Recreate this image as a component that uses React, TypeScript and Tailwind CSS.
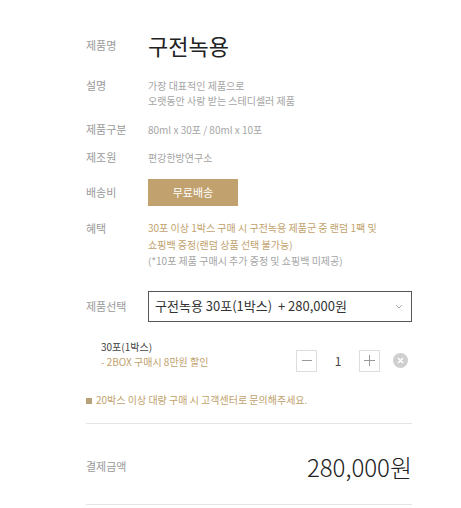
export default function App() {
  return (
    <div
      className="w-[461px] h-[508px] bg-white overflow-hidden"
      style={{ fontFamily: '"Noto Sans CJK KR", "Noto Sans", sans-serif' }}
    >
      <div className="ml-[86px] w-[326px] pt-[30px]">
        {/* 제품명 */}
        <div className="flex items-center h-[30px]">
          <div className="w-[62px] text-[11px] text-[#9a9a9a]">제품명</div>
          <h1 className="text-[22px] leading-[30px] text-[#222]">구전녹용</h1>
        </div>

        {/* 설명 */}
        <div className="flex mt-[18px] text-[10px] leading-[15px]">
          <div className="w-[62px] text-[11px] text-[#9a9a9a]">설명</div>
          <p className="text-[#a5a5a5]">
            가장 대표적인 제품으로
            <br />
            오랫동안 사랑 받는 스테디셀러 제품
          </p>
        </div>

        <div className="flex mt-[14px] text-[10px] leading-[15px]">
          <div className="w-[62px] text-[11px] text-[#9a9a9a]">제품구분</div>
          <p className="text-[#a5a5a5]">80ml x 30포 / 80ml x 10포</p>
        </div>

        <div className="flex mt-[13px] text-[10px] leading-[15px]">
          <div className="w-[62px] text-[11px] text-[#9a9a9a]">제조원</div>
          <p className="text-[#a5a5a5]">편강한방연구소</p>
        </div>

        <div className="flex items-center mt-[14px]">
          <div className="w-[62px] text-[11px] text-[#9a9a9a]">배송비</div>
          <span className="w-[90px] h-[27px] flex items-center justify-center bg-[#c1a26e] text-white text-[11px]">
            무료배송
          </span>
        </div>

        {/* 혜택 */}
        <div className="flex mt-[14px] text-[10px] leading-[16.5px]">
          <div className="w-[62px] text-[11px] text-[#9a9a9a]">혜택</div>
          <p>
            <span className="text-[#c1a26e]">
              30포 이상 1박스 구매 시 구전녹용 제품군 중 랜덤 1팩 및
              <br />
              쇼핑백 증정(랜덤 상품 선택 불가능)
            </span>
            <br />
            <span className="text-[#a5a5a5]">(*10포 제품 구매시 추가 증정 및 쇼핑백 미제공)</span>
          </p>
        </div>

        {/* 제품선택 */}
        <div className="flex items-center mt-[21px]">
          <div className="w-[62px] text-[11px] text-[#9a9a9a]">제품선택</div>
          <div className="flex-1 h-[31px] border border-[#555] flex items-center justify-between pl-[6px] pr-[8px]">
            <span className="text-[13px] text-[#333]">구전녹용 30포(1박스)&nbsp;&nbsp;+ 280,000원</span>
            <svg width="8" height="5" viewBox="0 0 8 5" fill="none" stroke="#aaa" strokeWidth="1">
              <path d="M1 1l3 3 3-3" />
            </svg>
          </div>
        </div>

        {/* 선택된 상품 */}
        <div className="flex items-center justify-between mt-[14px] pl-[15px] pr-[4px]">
          <div className="text-[10px] leading-[15px]">
            <p className="text-[#444]">30포(1박스)</p>
            <p className="text-[#c1a26e]">- 2BOX 구매시 8만원 할인</p>
          </div>
          <div className="flex items-center mt-[14px]">
            <button className="w-[21px] h-[22px] border border-[#ddd] flex items-center justify-center">
              <span className="block w-[10px] h-px bg-[#999]" />
            </button>
            <span className="w-[42px] text-center text-[12px] text-[#444]">1</span>
            <button className="w-[21px] h-[22px] border border-[#ddd] flex items-center justify-center relative">
              <span className="block w-[11px] h-px bg-[#999]" />
              <span className="absolute block w-px h-[11px] bg-[#999]" />
            </button>
            <span className="ml-[13px] w-[15px] h-[15px] rounded-full bg-[#cfcfcf] flex items-center justify-center">
              <svg width="7" height="7" viewBox="0 0 7 7" stroke="white" strokeWidth="1.6">
                <path d="M1 1l5 5M6 1L1 6" />
              </svg>
            </span>
          </div>
        </div>

        <p className="mt-[20px] text-[10px] leading-[15px] text-[#c1a26e]">
          <span className="inline-block w-[6px] h-[6px] bg-[#b9a27a] mr-[4px] align-[0px]" />
          20박스 이상 대량 구매 시 고객센터로 문의해주세요.
        </p>

        <hr className="mt-[16px] border-0 h-px bg-[#e5e5e5]" />

        <div className="flex items-center justify-between mt-[28px] h-[30px]">
          <div className="text-[11px] text-[#9a9a9a]">결제금액</div>
          <div className="text-[24px] font-light leading-[30px] text-[#222]">280,000원</div>
        </div>

        <hr className="mt-[22px] border-0 h-px bg-[#e5e5e5]" />
      </div>
    </div>
  );
}
